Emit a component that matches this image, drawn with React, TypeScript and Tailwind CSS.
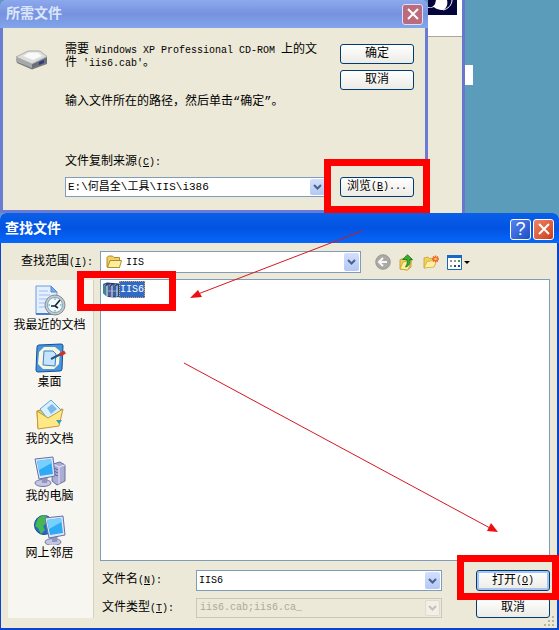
import type { ReactNode } from 'react';
import clsx from 'clsx';

const cjk = "font-['Liberation_Mono','Noto_Sans_CJK_SC',monospace]";

// Latin text is set smaller so that two letters take the width of one ideograph
const Latin = ({ children }: { children: ReactNode }) => <span className="whitespace-pre text-[10px]">{children}</span>;

const Key = ({ letter, tail = ':' }: { letter: string; tail?: string }) => (
  <Latin>
    (<u>{letter}</u>
    {`)${tail}`}
  </Latin>
);

function PushButton({ children, primary, className }: { children: ReactNode; primary?: boolean; className?: string }) {
  return (
    <button
      type="button"
      className={clsx(
        'flex w-[74px] shrink-0 items-center justify-center rounded-[3px] border border-[#003c74] bg-linear-to-b from-white to-[#ecebe5] text-[12px] leading-[12px] whitespace-nowrap',
        primary && 'shadow-[inset_0_0_0_2px_#a6c3f3]',
        className
      )}
    >
      {children}
    </button>
  );
}

function Highlight({ className }: { className: string }) {
  return <div className={clsx('pointer-events-none absolute z-20 border-[7px] border-[#ff0000]', className)} />;
}

function Chevron({ disabled }: { disabled?: boolean }) {
  return (
    <span
      className={clsx(
        'm-px flex w-[15px] shrink-0 items-center justify-center rounded-[2px]',
        disabled ? 'border border-[#dedbd0] bg-[#f1efe7]' : 'bg-linear-to-b from-[#d3dffd] to-[#b3c8f6]'
      )}
    >
      <svg viewBox="0 0 9 6" className="h-[6px] w-[9px]" fill="none" stroke={disabled ? '#c5c2b4' : '#4d6185'} strokeWidth="2">
        <path d="M1 1l3.5 3.5L8 1" />
      </svg>
    </span>
  );
}

function CloseIcon() {
  return (
    <svg viewBox="0 0 12 12" className="size-[12px]" stroke="#fff" strokeWidth="2">
      <path d="M1 1l10 10M11 1L1 11" />
    </svg>
  );
}

function DriveIcon() {
  return (
    <svg viewBox="0 0 34 20" className="mt-[6px] h-[20px] w-[34px] shrink-0">
      <path d="M1 9l16 8 15-6v3l-15 5.5L2 13z" fill="#77797c" />
      <path d="M1 7l16 7v4L2 12z" fill="#a6a8aa" />
      <path d="M17 14l15-7v5l-15 6z" fill="#6c6e73" />
      <path d="M1 7L13 1h12l7 5.5L17 14z" fill="#dcdddd" stroke="#96989a" strokeWidth=".7" />
      <path d="M8 6l6-3.5h9L27 6l-9 4z" fill="#f9f9f9" />
      <path d="M24 12l5-2v3l-5 2z" fill="#283e88" />
    </svg>
  );
}

function FolderIcon() {
  return (
    <svg viewBox="0 0 16 14" className="h-[14px] w-[16px] shrink-0" stroke="#a8821c" strokeWidth=".9" strokeLinejoin="round">
      <path d="M1 12V2.5L2.5 1h4L8 2.5h5.5V12z" fill="#f1d163" />
      <path d="M1.5 12.5L4 5.5h11.5l-2 7z" fill="#ffeea0" />
    </svg>
  );
}

function BackIcon() {
  return (
    <svg viewBox="0 0 16 16" className="size-[16px]">
      <circle cx="8" cy="8" r="7.3" fill="#aaa9a5" stroke="#8f8e8b" strokeWidth=".8" />
      <path d="M12 8H4.5M8 4L4 8l4 4" fill="none" stroke="#f7f7f5" strokeWidth="2" />
    </svg>
  );
}

function UpIcon() {
  return (
    <svg viewBox="0 0 16 17" className="h-[17px] w-[16px]">
      <path d="M1 15V5.5l4-1L6 6l6-1v8l-4 3z" fill="#f0cf58" stroke="#bd9526" strokeWidth=".8" />
      <path d="M1 15l3-7 9-2-4 10z" fill="#ffef9e" stroke="#c79f2b" strokeWidth=".8" />
      <path d="M3.5 5.500L8.5 .8l5 4.700H11c.5 4-1 6.500-4.500 7.500 2-3 2-5 1.500-7.500z" fill="#38b02d" stroke="#137018" strokeWidth=".8" />
    </svg>
  );
}

function NewFolderIcon() {
  return (
    <svg viewBox="0 0 16 16" className="size-[16px]">
      <path d="M1 14V4l4-1 1.5 1.5L12 4v7z" fill="#f4d05b" stroke="#c9a033" strokeWidth=".8" />
      <path d="M1 14l3-6.5L14 6l-3 7z" fill="#fff0a4" stroke="#d3aa39" strokeWidth=".8" />
      <path d="M12.5 1.500v7M9 5h7M10 2.500l5 5M15 2.500l-5 5" stroke="#ee5c20" strokeWidth="1.300" />
      <circle cx="12.5" cy="5" r="1.300" fill="#ffd85f" />
    </svg>
  );
}

function ViewsIcon() {
  return (
    <svg viewBox="0 0 23 15" className="h-[15px] w-[23px]">
      <path d="M.5.5h14v14H.5z" fill="#fff" stroke="#1a67b9" />
      <path d="M0 0h15v3H0z" fill="#1769c4" />
      <path d="M7 10h2v2H7zM11 10h2v2h-2z" fill="#24468b" />
      <path d="M3 5h2v2H3zM7 5h2v2H7zM3 10h2v2H3z" fill="#969696" />
      <path d="M11 5h2v2h-2z" fill="#3c9b49" />
      <path d="M17 6h6l-3 3z" fill="#000" />
    </svg>
  );
}

function ArchiveIcon() {
  return (
    <svg viewBox="0 0 17 16" className="h-[16px] w-[17px] shrink-0" strokeWidth=".6">
      <path d="M1 2l4-1.500 12 1V15l-5 .5L6 15l-5-4z" fill="#2a3f6c" />
      <path d="M1 2l3 2v10l-3-3z" fill="#3f8490" />
      <path d="M4 4l2-1v12l-2-1z" fill="#8fb2c4" />
      <path d="M6 2l3 2v11l-3-1z" fill="#535d9c" />
      <path d="M9 4l2-1v12H9z" fill="#96a2cd" />
      <path d="M11 2l3 2v11l-3-1z" fill="#3b5f9b" />
      <path d="M14 4l2-1v11l-2 1z" fill="#83a9d2" />
      <path d="M2 3.500l2-1.500M7 3.500L9 2M12 3.500L14 2M6 9h10" stroke="#c3d3e4" fill="none" />
    </svg>
  );
}

function RecentIcon() {
  return (
    <svg viewBox="0 0 32 32" className="size-[32px]">
      <path d="M2 1h15l6 6v22H2z" fill="#e4efff" stroke="#719cda" />
      <path d="M17 1v6h6z" fill="#79acee" stroke="#5688cf" />
      <path d="M5 6h9M5 10h11M5 14h8M5 18h7M5 22h7" stroke="#9dbfed" />
      <path d="M2 29h21" stroke="#4e7ed0" strokeWidth="2" />
      <circle cx="21" cy="20" r="10" fill="#c4cacc" stroke="#858d90" />
      <circle cx="21" cy="20" r="7.5" fill="#f2fbff" stroke="#7da9bd" />
      <path d="M26 15l-5 6h-4M21 21l3 2" fill="none" stroke="#16242d" strokeWidth="1.6" />
      <path d="M21 13.5V15M21 25v1.5M14.5 20H16M26 20h1.5" stroke="#2393b5" />
    </svg>
  );
}

function DesktopIcon() {
  return (
    <svg viewBox="0 0 32 32" className="size-[32px]">
      <path d="M5 3l22-1q2 0 2 2l-1 23q0 2-2 2L4 30q-2 0-2-2L3 5q0-2 2-2z" fill="#4793de" stroke="#145094" />
      <path d="M10 5h11l5 4-1 13-5 5H9l-5-5 1-12z" fill="#f9f8dc" />
      <path d="M10 9h9l3 3-1 12-12-1z" fill="#c6e4ff" stroke="#3482cb" />
      <path d="M17 17l10-5" stroke="#26567f" strokeWidth="2" />
      <path d="M26 13l5-3" stroke="#cf3427" strokeWidth="3.500" />
    </svg>
  );
}

function DocumentsIcon() {
  return (
    <svg viewBox="0 0 32 32" className="size-[32px]">
      <path d="M3 12l7-2 5 4 13-4-3 14-21 5z" fill="#efc951" stroke="#bd902c" />
      <path d="M6 10L17 1l11 11-12 11z" fill="#d9f1ff" stroke="#5da2d5" />
      <path d="M13 9l5-4 5 5-6 5z" fill="#7dbae9" />
      <path d="M4 30L3 12l11 7 15-9-4 17z" fill="#ffe886" stroke="#c59a36" />
      <path d="M22 21h6l-3 4z" fill="#2f9ec5" />
    </svg>
  );
}

function Monitor() {
  return (
    <>
      <ellipse cx="9" cy="27" rx="8" ry="3.5" fill="#c2c6e2" stroke="#7377a6" />
      <path d="M8 19h6l-1 8H8z" fill="#9296be" />
      <path d="M1 3l18-2 2 19-16 3z" fill="#e0e6f8" stroke="#6571a7" />
      <path d="M3 5l14-2 2 15-13 2z" fill="#2fabf5" />
      <path d="M3 5l14-2 .5 4L5 14z" fill="#78d0ff" />
    </>
  );
}

function ComputerIcon() {
  return (
    <svg viewBox="0 0 32 32" className="size-[32px]">
      <path d="M19 8l7-2 5 3v16l-8 4-5-4z" fill="#aaaed5" stroke="#6a6fa0" />
      <path d="M19 8l6 3 6-2M25 11v17" fill="none" stroke="#e6e7f5" />
      <path d="M20 12l4 2M20 15l4 2M20 18l4 2" stroke="#575c91" />
      <Monitor />
    </svg>
  );
}

function NetworkIcon() {
  return (
    <svg viewBox="0 0 32 32" className="size-[32px]">
      <circle cx="10" cy="12" r="9.5" fill="#256bc6" stroke="#174a8f" />
      <path d="M4 5l6-3 5 3-2 5-4 3 2 4-4 4-3-6-3-2z" fill="#46b752" />
      <g transform="translate(10 2)">
        <Monitor />
      </g>
    </svg>
  );
}

const places = [
  { label: '我最近的文档', icon: <RecentIcon /> },
  { label: '桌面', icon: <DesktopIcon /> },
  { label: '我的文档', icon: <DocumentsIcon /> },
  { label: '我的电脑', icon: <ComputerIcon /> },
  { label: '网上邻居', icon: <NetworkIcon /> },
];

function FilesNeededDialog() {
  return (
    <section className="flex min-w-0 flex-1 flex-col rounded-t-[6px] border-x-[3px] border-b-[3px] border-[#6b7bd3] bg-[#ece9d8]">
      <header className="-mx-[3px] flex h-[28px] items-center justify-between rounded-t-[6px] bg-linear-to-b from-[#8da9ec] via-[#7692df] to-[#82a5ec] pr-[5px] pl-[6px]">
        <h1 className="text-[14px] leading-[14px] font-bold text-[#dce6fb]">所需文件</h1>
        <button
          type="button"
          aria-label="关闭"
          className="flex size-[21px] items-center justify-center rounded-[3px] border border-[#dfe0f5] bg-[#bc6b7c]"
        >
          <CloseIcon />
        </button>
      </header>
      <div className="flex flex-1 pt-[16px] pr-[11px] pb-[13px] pl-[12px]">
        <DriveIcon />
        <div className="ml-[16px] flex flex-1 flex-col text-[12px] leading-[12px]">
          <p className="whitespace-nowrap">
            需要
            <Latin> Windows XP Professional CD-ROM </Latin>
            上的文
            <br />件<Latin> 'iis6.cab'</Latin>。
          </p>
          <p className="mt-[26px] whitespace-nowrap">输入文件所在的路径，然后单击“确定”。</p>
          <label htmlFor="source" className="mt-auto mb-[8px] whitespace-nowrap">
            文件复制来源
            <Key letter="C" />
          </label>
          <div className="flex h-[20px] border border-[#7f9db9] bg-white">
            <input
              id="source"
              defaultValue="E:\何昌全\工具\IIS\i386"
              className="min-w-0 flex-1 pl-[2px] text-[11px] leading-[16px] outline-none"
            />
            <Chevron />
          </div>
        </div>
        <div className="ml-[13px] flex flex-col gap-[6px]">
          <PushButton className="h-[20px]">确定</PushButton>
          <PushButton className="h-[20px]">取消</PushButton>
          <div className="relative mt-auto">
            <PushButton className="h-[20px]">
              浏览
              <Key letter="B" tail="..." />
            </PushButton>
            <Highlight className="-top-[18px] -right-[16px] -bottom-[16px] -left-[16px]" />
          </div>
        </div>
      </div>
    </section>
  );
}

function BackgroundWindow() {
  return (
    <div className="w-[37px] shrink-0 border-r-[3px] border-[#6876cb] bg-[#ece9d8]">
      <div className="h-[37px] border-b border-[#aca899] bg-white">
        <svg viewBox="0 0 29 15" className="h-[15px] w-[29px]">
          <path d="M0 0h29v15H0z" fill="#04043c" />
          <path d="M0 7c3 1 5 0 7-3l1-4h11c1 4 0 8-4 10-5 0-8-2-9-3-2 1-4 1-6 1z" fill="#fff" />
          <path d="M24 0c0 5-4 9-9 10" stroke="#fff" fill="none" />
        </svg>
      </div>
    </div>
  );
}

function FindFileDialog() {
  return (
    <section className="flex flex-1 flex-col rounded-t-[6px] bg-[#ece9d8]">
      <header className="flex h-[30px] shrink-0 items-center justify-between rounded-t-[6px] bg-linear-to-b from-[#0a5fe8] via-[#0353e2] to-[#0667fa] pt-[2px] pr-[5px] pl-[5px]">
        <h1 className="text-[14px] leading-[14px] font-bold text-white">查找文件</h1>
        <div className="flex gap-[2px]">
          <button
            type="button"
            aria-label="帮助"
            className="flex size-[21px] items-center justify-center rounded-[3px] border border-white bg-linear-to-br from-[#5583ed] to-[#1c4fc9] font-['Liberation_Sans',sans-serif] text-[18px] leading-[18px] text-white"
          >
            ?
          </button>
          <button
            type="button"
            aria-label="关闭"
            className="flex size-[21px] items-center justify-center rounded-[3px] border border-white bg-linear-to-br from-[#ec8566] to-[#ce3a12]"
          >
            <CloseIcon />
          </button>
        </div>
      </header>
      <div className="flex flex-1 flex-col border-r-2 border-b-2 border-l border-[#0a45cf] pt-[8px] pr-[7px] pb-[10px] pl-[7px]">
        <div className="flex h-[22px] items-center">
          <label htmlFor="folder" className="w-[92px] shrink-0 pl-[13px] text-[12px] leading-[12px] whitespace-nowrap">
            查找范围
            <Key letter="I" />
          </label>
          <div className="flex h-[22px] flex-1 items-stretch border border-[#7f9db9] bg-white pl-[5px]">
            <span className="flex items-center">
              <FolderIcon />
            </span>
            <input id="folder" defaultValue="IIS" className="min-w-0 flex-1 pl-[4px] text-[10px] outline-none" />
            <Chevron />
          </div>
          <div className="flex w-[189px] shrink-0 items-center gap-[8px] pl-[14px]">
            <button type="button" aria-label="返回">
              <BackIcon />
            </button>
            <button type="button" aria-label="向上一级">
              <UpIcon />
            </button>
            <button type="button" aria-label="新建文件夹">
              <NewFolderIcon />
            </button>
            <button type="button" aria-label="查看">
              <ViewsIcon />
            </button>
          </div>
        </div>
        <div className="mt-[6px] flex flex-1 gap-[6px]">
          <nav className="mt-px flex w-[86px] shrink-0 flex-col gap-[9px] border-r border-[#d5d1c0] bg-[#f8f6f0] pt-[5px] pr-[2px]">
            {places.map(({ label, icon }) => (
              <button
                key={label}
                type="button"
                className="flex flex-col items-center gap-[3px] text-[12px] leading-[13px] whitespace-nowrap"
              >
                {icon}
                {label}
              </button>
            ))}
          </nav>
          <div className="flex min-w-0 flex-1 flex-col">
            <div className="relative flex-1 border border-[#7f9db9] bg-white">
              <button type="button" className="mt-px ml-px flex items-center">
                <ArchiveIcon />
                <span className="h-[17px] bg-[#316ac5] px-px text-[10px] leading-[17px] text-white outline-1 -outline-offset-1 outline-dotted outline-[#d9a35f]">
                  IIS6
                </span>
              </button>
              <Highlight className="-top-[9px] -left-[24px] h-[40px] w-[99px]" />
            </div>
            <div className="mt-[9px] flex">
              <div className="flex flex-1 flex-col gap-[7px] text-[12px] leading-[12px]">
                <div className="flex h-[21px] items-center">
                  <label htmlFor="name" className="w-[96px] shrink-0 pl-[2px] whitespace-nowrap">
                    文件名
                    <Key letter="N" />
                  </label>
                  <div className="flex h-[21px] min-w-0 flex-1 border border-[#7f9db9] bg-white">
                    <input id="name" defaultValue="IIS6" className="min-w-0 flex-1 pl-[2px] text-[10px] outline-none" />
                    <Chevron />
                  </div>
                </div>
                <div className="flex h-[20px] items-center">
                  <label htmlFor="type" className="w-[96px] shrink-0 pl-[2px] whitespace-nowrap">
                    文件类型
                    <Key letter="T" />
                  </label>
                  <div className="flex h-[20px] min-w-0 flex-1 border border-[#c9c7ba]">
                    <input
                      id="type"
                      disabled
                      defaultValue="iis6.cab;iis6.ca_"
                      className="min-w-0 flex-1 pl-[3px] text-[10px] text-[#aca899]"
                    />
                    <Chevron disabled />
                  </div>
                </div>
              </div>
              <div className="ml-[34px] flex flex-col gap-[7px]">
                <div className="relative">
                  <PushButton primary className="h-[21px]">
                    打开
                    <Key letter="O" tail="" />
                  </PushButton>
                  <Highlight className="-top-[15px] -right-[9px] -bottom-[9px] -left-[19px]" />
                </div>
                <PushButton className="h-[20px]">取消</PushButton>
              </div>
            </div>
          </div>
        </div>
      </div>
    </section>
  );
}

export default function App() {
  return (
    <main className={clsx('relative flex min-h-screen flex-col bg-[#5a9cba] text-black', cjk)}>
      <div className="flex h-[213px] shrink-0">
        <FilesNeededDialog />
        <BackgroundWindow />
        <div className="w-[94px] shrink-0 pt-[65px]">
          <div className="h-[20px] w-[8px] bg-white" />
        </div>
      </div>
      <FindFileDialog />
      <svg viewBox="0 0 559 630" className="pointer-events-none absolute top-0 left-0 z-30 w-full" stroke="#d51820">
        <path d="M362 231L198 294M184 363l306 165" />
        <path d="M190 298l8-8 4 7zM498 532l-11-1 4-8z" fill="#ee1010" stroke="none" />
      </svg>
      <svg viewBox="0 0 12 12" className="absolute right-[4px] bottom-[3px] size-[12px]" fill="#b8b4a2">
        <path d="M9 1h2v2H9zM5 5h2v2H5zM9 5h2v2H9zM1 9h2v2H1zM5 9h2v2H5zM9 9h2v2H9z" />
      </svg>
    </main>
  );
}
